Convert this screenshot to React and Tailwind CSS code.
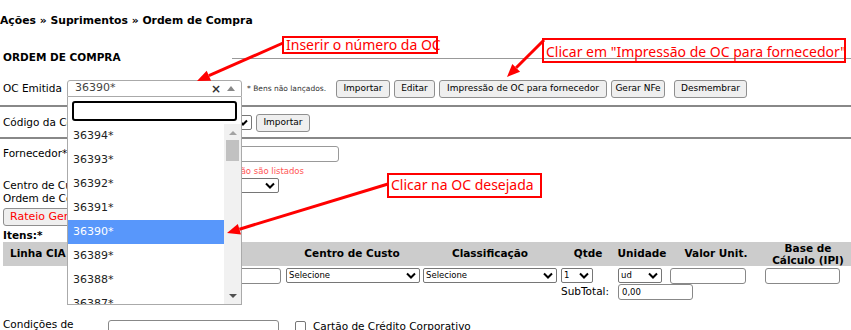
import React from 'react';

const RED = '#ff0000';

function Arrow({ x1, y1, x2, y2 }) {
  const dx = x2 - x1, dy = y2 - y1;
  const len = Math.hypot(dx, dy);
  const ux = dx / len, uy = dy / len;
  const bx = x2 - ux * 13, by = y2 - uy * 13;
  const px = -uy * 5.5, py = ux * 5.5;
  return (
    <g>
      <line x1={x1} y1={y1} x2={bx} y2={by} stroke={RED} strokeWidth="3" />
      <polygon points={`${x2},${y2} ${bx + px},${by + py} ${bx - px},${by - py}`} fill={RED} />
    </g>
  );
}

function Chevron() {
  return (
    <svg width="10" height="7" viewBox="0 0 10 7" className="shrink-0">
      <polyline points="1,1.5 5,5.5 9,1.5" fill="none" stroke="#000" strokeWidth="2" />
    </svg>
  );
}

function FakeSelect({ w, children }) {
  return (
    <div className={`${w} h-[15px] border border-[#767676] rounded-[2px] bg-white flex items-center justify-between pl-[2px] pr-[3px] text-[8.5px]`}>
      <span>{children}</span>
      <Chevron />
    </div>
  );
}

function Btn({ w, children, className = '' }) {
  return (
    <button className={`${w} h-[18px] border border-[#8f8f8f] rounded-[3px] bg-[#efefef] text-[9px] flex items-center justify-center shrink-0 ${className}`}>
      {children}
    </button>
  );
}

const items = ['36394*', '36393*', '36392*', '36391*', '36390*', '36389*', '36388*', '36387*'];

export default function App() {
  return (
    <div className="relative w-[851px] h-[330px] overflow-hidden bg-white text-black text-[10.5px] font-['DejaVu_Sans',sans-serif]">
      <div className="pt-[14px] h-[28px] leading-[14px] font-bold text-[10.8px]">Ações » Suprimentos » Ordem de Compra</div>

      <div className="mt-[23px] h-[14px] flex items-center">
        <div className="w-[232px] pl-[3px] font-bold">ORDEM DE COMPRA</div>
        <div className="flex-1 border-t border-[#999]" />
      </div>

      <div className="mt-[15px] h-[17px] flex items-center pl-[3px]">
        <div className="w-[64px]">OC Emitida</div>
        <div className="w-[175px] h-[17px] border border-[#aaa] rounded-t-[3px] flex items-center pl-[7px] pr-[6px] text-[11px] text-[#444]">
          <span className="flex-1">36390*</span>
          <span className="text-[12px] font-bold text-[#333] mr-[6px] leading-none">×</span>
          <span className="w-0 h-0 border-x-[4px] border-x-transparent border-b-[5px] border-b-[#888]" />
        </div>
        <div className="w-[94px] pl-[5px] text-[7.5px] text-[#333]">* Bens não lançados.</div>
        <Btn w="w-[54px]">Importar</Btn>
        <Btn w="w-[41px]" className="ml-[4px]">Editar</Btn>
        <Btn w="w-[168px]" className="ml-[4px]">Impressão de OC para fornecedor</Btn>
        <Btn w="w-[54px]" className="ml-[4px]">Gerar NFe</Btn>
        <Btn w="w-[73px]" className="ml-[9px]">Desmembrar</Btn>
      </div>

      <div className="mt-[8px] h-[2px] bg-[#888]" />

      <div className="mt-[7px] h-[17px] flex items-center pl-[3px]">
        <div className="w-[160px]">Código da Compra</div>
        <FakeSelect w="w-[89px]">Todos</FakeSelect>
        <Btn w="w-[54px]" className="ml-[4px]">Importar</Btn>
      </div>

      <div className="mt-[6px] h-[2px] bg-[#888]" />

      <div className="mt-[7px] h-[16px] flex items-center pl-[3px]">
        <div className="w-[76px]">Fornecedor*</div>
        <div className="w-[260px] h-[16px] border border-[#999] rounded-[3px]" />
      </div>
      <div className="mt-[4px] h-[10px] w-[304px] text-right text-[8.5px] leading-[10px] text-[#f55]">Fornecedores bloqueados não são listados</div>

      <div className="mt-[3px] h-[13px] flex items-center pl-[3px]">
        <div className="w-[170px]">Centro de Custo</div>
        <FakeSelect w="w-[106px]"></FakeSelect>
      </div>
      <div className="h-[14px] flex items-center pl-[3px]">Ordem de Compra Origem</div>

      <div className="mt-[2px] pl-[3px]">
        <button className="h-[18px] px-[6px] border border-[#8f8f8f] rounded-[3px] bg-[#efefef] text-[#f00] text-[11px]">Rateio Geral</button>
      </div>

      <div className="mt-[3px] h-[13px] leading-[13px] pl-[3px] font-bold">Itens:*</div>

      <div className="ml-[3px] grid grid-cols-[280px_138px_138px_58px_50px_98px_86px] h-[24px] bg-[#ccc] font-bold items-center">
        <div className="pl-[7px]">Linha CIA</div>
        <div className="text-center">Centro de Custo</div>
        <div className="text-center">Classificação</div>
        <div className="text-center">Qtde</div>
        <div className="text-center">Unidade</div>
        <div className="text-center">Valor Unit.</div>
        <div className="text-center leading-[12px]">Base de<br />Cálculo (IPI)</div>
      </div>

      <div className="ml-[3px] mt-[2px] grid grid-cols-[280px_138px_138px_58px_50px_98px_86px] items-start">
        <div className="flex justify-end pr-[2px]">
          <div className="w-[130px] h-[16px] border border-[#888] rounded-[3px]" />
        </div>
        <div className="pl-[3px]"><FakeSelect w="w-[134px]">Selecione</FakeSelect></div>
        <div className="pl-[2px]"><FakeSelect w="w-[134px]">Selecione</FakeSelect></div>
        <div className="pl-[2px]"><FakeSelect w="w-[32px]">1</FakeSelect></div>
        <div className="pl-[1px]"><FakeSelect w="w-[44px]">ud</FakeSelect></div>
        <div className="pl-[3px]"><div className="w-[76px] h-[16px] border border-[#888] rounded-[3px]" /></div>
        <div><div className="w-[75px] h-[16px] border border-[#888] rounded-[3px]" /></div>

        <div className="col-start-4 pl-[2px] h-[16px] flex items-center">SubTotal:</div>
        <div className="col-span-2 pl-[1px]">
          <div className="w-[75px] h-[16px] border border-[#888] rounded-[3px] flex items-center pl-[3px] text-[8.5px]">0,00</div>
        </div>
      </div>

      <div className="mt-[20px] flex items-start pl-[3px]">
        <div className="w-[105px] leading-[13px] -mt-[2px]">Condições de<br />Pagamento</div>
        <div className="w-[171px] h-[16px] border border-[#888] rounded-[3px]" />
        <div className="ml-[16px] w-[11px] h-[11px] border border-[#767676] rounded-[2px] mt-[1px]" />
        <div className="ml-[7px] leading-[13px]">Cartão de Crédito Corporativo</div>
      </div>

      {/* select2 dropdown, open over the form */}
      <div className="absolute left-[67px] top-[97px] w-[175px] h-[208px] bg-white border-x border-b border-[#aaa] flex flex-col">
        <div className="mt-[4px] mx-[4px] h-[20px] border-2 border-black rounded-[3px]" />
        <div className="mt-[3px] flex-1 flex overflow-hidden">
          <div className="flex-1 overflow-hidden">
            {items.map((it) => (
              <div key={it} className={`h-[24px] pl-[5px] flex items-center text-[11px] ${it === '36390*' ? 'bg-[#5897fb] text-white' : 'text-[#222]'}`}>{it}</div>
            ))}
          </div>
          <div className="w-[17px] bg-[#f1f1f1] flex flex-col items-center">
            <span className="mt-[7px] w-0 h-0 border-x-[4px] border-x-transparent border-b-[4px] border-b-[#a3a3a3]" />
            <div className="mt-[5px] w-[13px] h-[21px] bg-[#c1c1c1]" />
            <div className="flex-1" />
            <span className="mb-[6px] w-0 h-0 border-x-[4px] border-x-transparent border-t-[4px] border-t-[#505050]" />
          </div>
        </div>
      </div>

      {/* annotations */}
      <div className="absolute left-[282px] top-[36px] w-[156px] h-[18px] border-2 border-[#f00] text-[#f00] text-[14px] leading-[13px] pl-[2px] font-['Noto_Sans',sans-serif] whitespace-nowrap">Inserir o número da OC</div>
      <div className="absolute left-[542px] top-[38px] w-[304px] h-[25px] border-2 border-[#f00] text-[#f00] text-[14px] leading-[24px] pl-[2px] font-['Noto_Sans',sans-serif] whitespace-nowrap">Clicar em "Impressão de OC para fornecedor"</div>
      <div className="absolute left-[387px] top-[173px] w-[155px] h-[25px] border-2 border-[#f00] text-[#f00] text-[14px] leading-[20px] pl-[2px] font-['Noto_Sans',sans-serif] whitespace-nowrap">Clicar na OC desejada</div>

      <svg className="absolute inset-0 pointer-events-none" width="851" height="330">
        <Arrow x1={283} y1={43} x2={197} y2={81} />
        <Arrow x1={544} y1={40} x2={507} y2={77} />
        <Arrow x1={388} y1={184} x2={227} y2={233} />
      </svg>
    </div>
  );
}
